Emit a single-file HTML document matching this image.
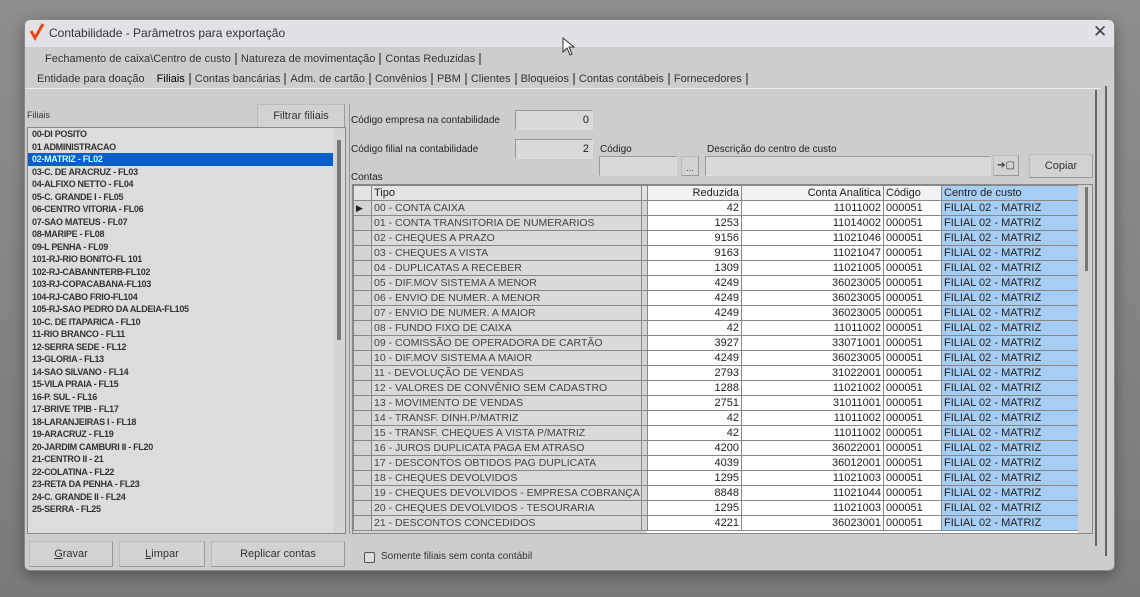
<!DOCTYPE html>
<html><head><meta charset="utf-8"><style>
*{margin:0;padding:0;box-sizing:border-box}
body{width:1140px;height:597px;background:linear-gradient(#8e8e8e,#7a7a7a);position:relative;overflow:hidden;font-family:"Liberation Sans",sans-serif;font-size:11px;color:#222}
.a{position:absolute}
#win{left:24px;top:19px;width:1091px;height:552px;background:#cdcdcd;border:1px solid #888;border-radius:6px;box-shadow:0 4px 14px rgba(0,0,0,.35)}
#title{left:0;top:0;width:1089px;height:27px;background:#e0e2e6;border-radius:6px 6px 0 0}
.tab{position:absolute;font-size:11px;white-space:nowrap;color:#333}
.sep{border-right:2px solid #777;padding-right:4px;margin-right:4px}
.btn{position:absolute;background:#d2d2d2;border:1px solid #bbb;border-bottom-color:#999;border-right-color:#999;text-align:center;font-size:11px;color:#333}
.inp{position:absolute;background:#d9d9d9;border:1px solid #999;border-right-color:#ddd;border-bottom-color:#ddd;font-size:11px;text-align:right;padding-right:3px}
#list div{height:12.5px;line-height:12.5px;font-size:9px;font-weight:bold;letter-spacing:-.3px;padding-left:4px;color:#333;white-space:nowrap}
table{border-collapse:collapse;font-size:11px}
td{height:15px;line-height:14px;border:1px solid #888;padding:0 2px;white-space:nowrap;overflow:hidden}
</style></head><body>
<div id="win" class="a">
 <div id="title" class="a">
  <svg class="a" style="left:4px;top:3px" width="16" height="18"><path d="M2 8 L6 15 L14 1" stroke="#e8471c" stroke-width="3" fill="none"/></svg>
  <div class="a" style="left:24px;top:6px;font-size:12px;color:#333">Contabilidade - Parâmetros para exportação</div>
  <div class="a" style="left:1068px;top:2px;font-size:17px;color:#444">✕</div>
 </div>
 <div class="tab" style="left:20px;top:33px"><span class="sep">Fechamento de caixa\Centro de custo</span><span class="sep">Natureza de movimentação</span><span class="sep">Contas Reduzidas</span></div>
 <div class="tab" style="left:12px;top:53px"><span style="margin-right:12px">Entidade para doação</span><span class="sep" style="color:#000">Filiais</span><span class="sep">Contas bancárias</span><span class="sep">Adm. de cartão</span><span class="sep">Convênios</span><span class="sep">PBM</span><span class="sep">Clientes</span><span class="sep">Bloqueios</span><span class="sep">Contas contábeis</span><span class="sep">Fornecedores</span></div>
 <div class="a" style="left:0;top:68px;width:1076px;height:2px;border-top:1px solid #eee"></div>
 <div class="a" style="left:1070px;top:70px;width:4px;height:456px;border-left:2px solid #666"></div>
 <div class="a" style="left:1079px;top:66px;width:3px;height:470px;border-right:2px solid #666"></div>
 <div class="a" style="left:2px;top:90px;font-size:9px;color:#333">Filiais</div>
 <div class="btn" style="left:232px;top:84px;width:88px;height:24px;line-height:22px">Filtrar filiais</div>
 <div id="list" class="a" style="left:2px;top:107px;width:319px;height:407px;background:#dcdcdc;border:1px solid #888;overflow:hidden">
  <div>00-DI POSITO</div><div>01 ADMINISTRACAO</div><div style="background:#0a5fc4;color:#cfe;margin-right:12px">02-MATRIZ - FL02</div><div>03-C. DE ARACRUZ - FL03</div><div>04-ALFIXO NETTO - FL04</div><div>05-C. GRANDE I - FL05</div><div>06-CENTRO VITORIA - FL06</div><div>07-SAO MATEUS - FL07</div><div>08-MARIPE - FL08</div><div>09-L PENHA - FL09</div><div>101-RJ-RIO BONITO-FL 101</div><div>102-RJ-CABANNTERB-FL102</div><div>103-RJ-COPACABANA-FL103</div><div>104-RJ-CABO FRIO-FL104</div><div>105-RJ-SAO PEDRO DA ALDEIA-FL105</div><div>10-C. DE ITAPARICA - FL10</div><div>11-RIO BRANCO - FL11</div><div>12-SERRA SEDE - FL12</div><div>13-GLORIA - FL13</div><div>14-SAO SILVANO - FL14</div><div>15-VILA PRAIA - FL15</div><div>16-P. SUL - FL16</div><div>17-BRIVE TPIB - FL17</div><div>18-LARANJEIRAS I - FL18</div><div>19-ARACRUZ - FL19</div><div>20-JARDIM CAMBURI II - FL20</div><div>21-CENTRO II - 21</div><div>22-COLATINA - FL22</div><div>23-RETA DA PENHA - FL23</div><div>24-C. GRANDE II - FL24</div><div>25-SERRA - FL25</div>
  <div class="a" style="right:0;top:0;width:12px;height:405px;background:#d4d4d4"></div>
  <div class="a" style="right:4px;top:12px;width:3px;height:200px;background:#777"></div>
 </div>
 <div class="a" style="left:324px;top:84px;height:430px;border-left:1px solid #999"></div>
 <div class="a" style="left:326px;top:95px;font-size:10px">Código empresa na contabilidade</div>
 <div class="inp" style="left:490px;top:90px;width:78px;height:20px;line-height:18px">0</div>
 <div class="a" style="left:326px;top:124px;font-size:10px">Código filial na contabilidade</div>
 <div class="inp" style="left:490px;top:119px;width:78px;height:20px;line-height:18px">2</div>
 <div class="a" style="left:575px;top:124px;font-size:10px">Código</div>
 <div class="inp" style="left:574px;top:136px;width:78px;height:20px"></div>
 <div class="btn" style="left:656px;top:136px;width:18px;height:20px;font-size:9px;line-height:22px">...</div>
 <div class="a" style="left:682px;top:124px;font-size:10px">Descrição do centro de custo</div>
 <div class="inp" style="left:680px;top:136px;width:286px;height:20px"></div>
 <div class="btn" style="left:968px;top:135px;width:26px;height:21px;line-height:19px;font-size:10px">➔▢</div>
 <div class="btn" style="left:1004px;top:134px;width:64px;height:24px;line-height:22px">Copiar</div>
 <div class="a" style="left:326px;top:152px;font-size:10px">Contas</div>
 <div class="a" style="left:327px;top:164px;width:741px;height:350px;background:#d4d4d4;border:1px solid #888;overflow:hidden">
  <div class="a" style="left:294px;top:-3px;width:432px;height:352px;background:#fff"></div>
  <table class="a" style="left:0;top:0">
   <tr style="background:#e4e4e4"><td style="width:18px"></td><td style="width:270px">Tipo</td><td style="width:6px;padding:0"></td><td style="width:94px;text-align:right;background:#f2f2f2">Reduzida</td><td style="width:142px;text-align:right;background:#f2f2f2">Conta Analitica</td><td style="width:58px;background:#f2f2f2">Código</td><td style="width:137px;background:#a6cdf4">Centro de custo</td></tr>
  </table>
  <table class="a" style="left:0;top:15px" id="g"></table>
  <div class="a" style="right:0;top:0;width:14px;height:348px;background:#d0d0d0"></div>
  <div class="a" style="right:4px;top:2px;width:3px;height:84px;background:#777"></div>
 </div>
 <div class="btn" style="left:4px;top:521px;width:84px;height:26px;line-height:24px"><u>G</u>ravar</div>
 <div class="btn" style="left:94px;top:521px;width:86px;height:26px;line-height:24px"><u>L</u>impar</div>
 <div class="btn" style="left:186px;top:521px;width:134px;height:26px;line-height:24px">Replicar contas</div>
 <div class="a" style="left:339px;top:532px;width:11px;height:11px;border:1px solid #555;border-radius:2px;background:#ddd"></div>
 <div class="a" style="left:356px;top:531px;font-size:10px;color:#333">Somente filiais sem conta contábil</div>
</div>
<svg class="a" style="left:562px;top:37px" width="14" height="20"><path d="M1 1 L1 15 L5 11 L8 18 L10 17 L7 10 L12 10 Z" fill="#fff" stroke="#333"/></svg>
<script>
var d=[["00 - CONTA CAIXA",42,11011002],["01 - CONTA TRANSITORIA DE NUMERARIOS",1253,11014002],["02 - CHEQUES A PRAZO",9156,11021046],["03 - CHEQUES A VISTA",9163,11021047],["04 - DUPLICATAS A RECEBER",1309,11021005],["05 - DIF.MOV SISTEMA A MENOR",4249,36023005],["06 - ENVIO DE NUMER. A MENOR",4249,36023005],["07 - ENVIO DE NUMER. A MAIOR",4249,36023005],["08 - FUNDO FIXO DE CAIXA",42,11011002],["09 - COMISSÃO DE OPERADORA DE CARTÃO",3927,33071001],["10 - DIF.MOV SISTEMA A MAIOR",4249,36023005],["11 - DEVOLUÇÃO DE VENDAS",2793,31022001],["12 - VALORES DE CONVÊNIO SEM CADASTRO",1288,11021002],["13 - MOVIMENTO DE VENDAS",2751,31011001],["14 - TRANSF. DINH.P/MATRIZ",42,11011002],["15 - TRANSF. CHEQUES A VISTA P/MATRIZ",42,11011002],["16 - JUROS DUPLICATA PAGA EM ATRASO",4200,36022001],["17 - DESCONTOS OBTIDOS PAG DUPLICATA",4039,36012001],["18 - CHEQUES DEVOLVIDOS",1295,11021003],["19 - CHEQUES DEVOLVIDOS - EMPRESA COBRANÇA",8848,11021044],["20 - CHEQUES DEVOLVIDOS - TESOURARIA",1295,11021003],["21 - DESCONTOS CONCEDIDOS",4221,36023001]];
var h="";d.forEach(function(r,i){h+='<tr><td style="width:18px;background:#d4d4d4;font-size:9px">'+(i?'':'▶')+'</td><td style="width:270px;max-width:270px;background:#dadada;color:#444;font-size:10.5px">'+r[0]+'</td><td style="width:6px;padding:0;background:#d4d4d4"></td><td style="width:94px;text-align:right;background:#fff">'+r[1]+'</td><td style="width:142px;text-align:right;background:#fff">'+r[2]+'</td><td style="width:58px;background:#fff">000051</td><td style="width:137px;background:#a6cdf4">FILIAL 02 - MATRIZ</td></tr>'});
document.getElementById('g').innerHTML=h;
</script>
</body></html>
